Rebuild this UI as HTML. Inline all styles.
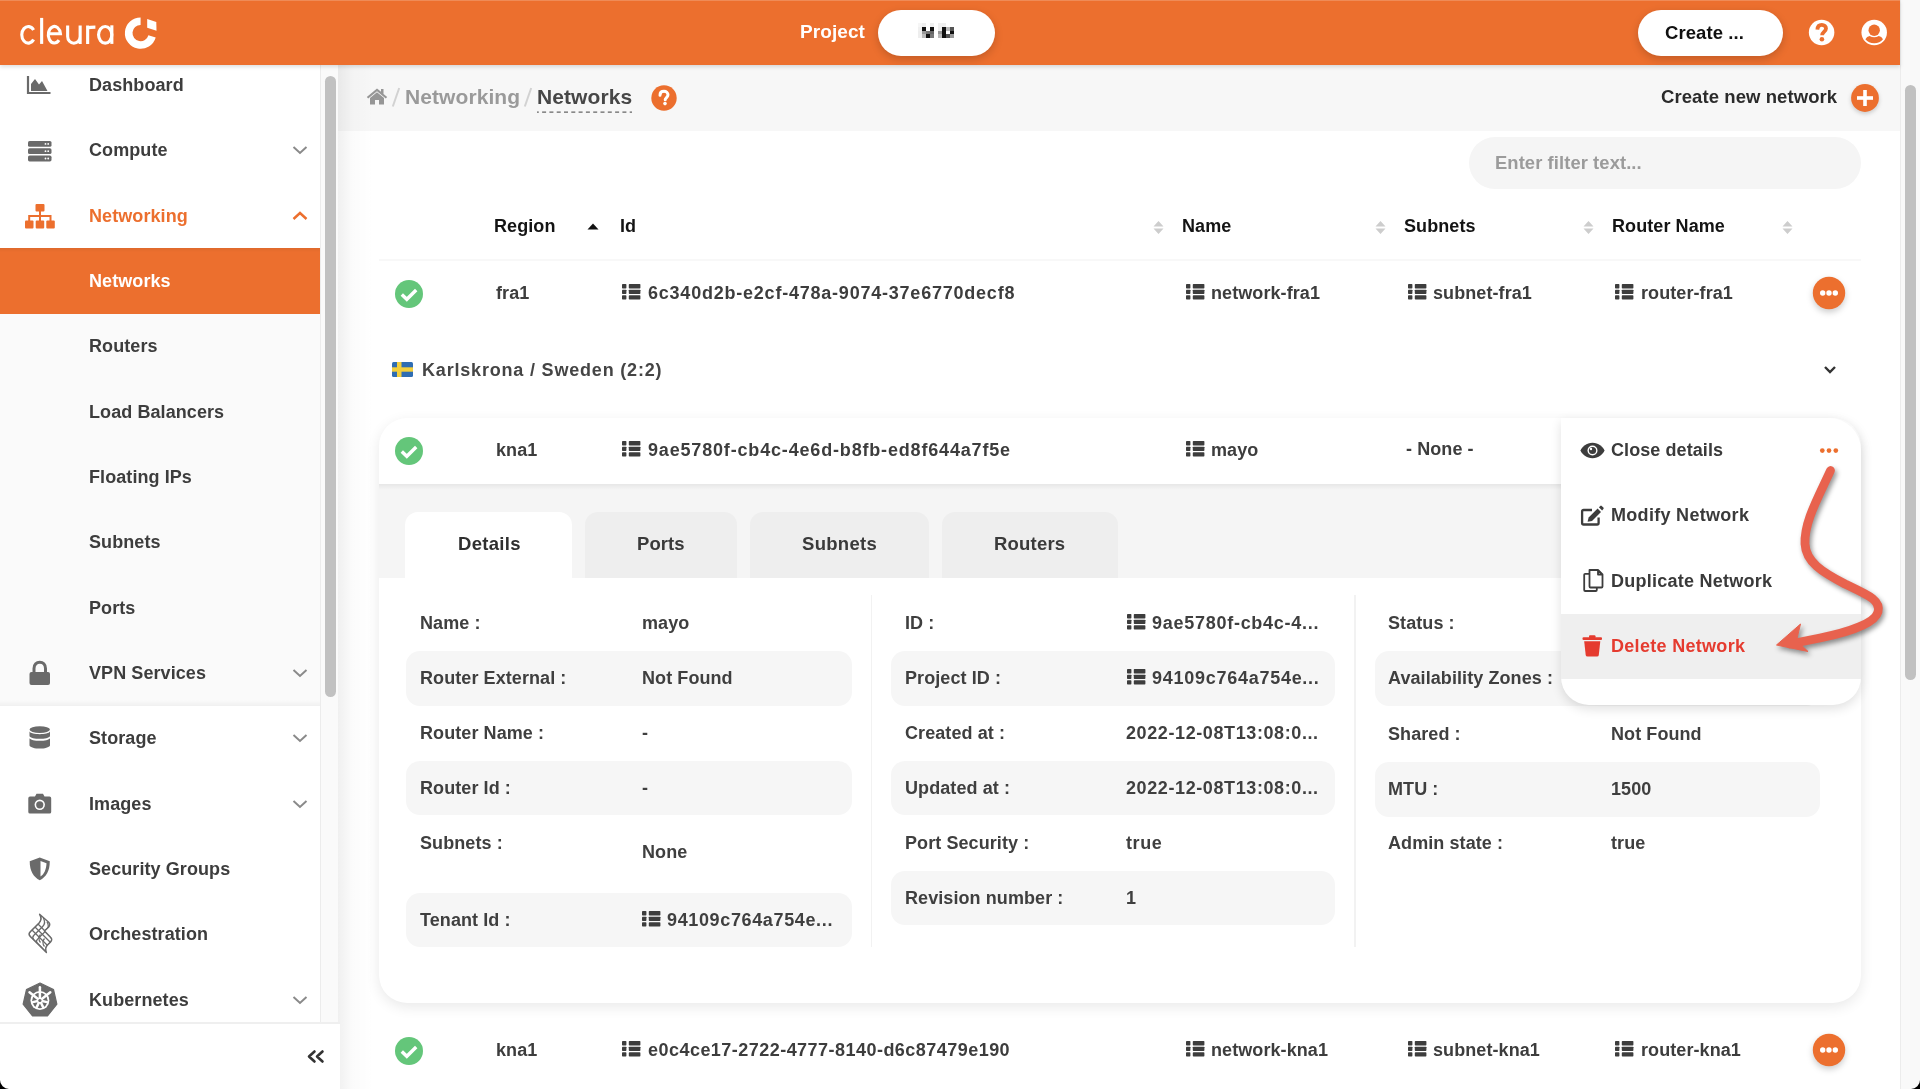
<!DOCTYPE html>
<html><head><meta charset="utf-8"><title>Networks</title>
<style>
html,body{margin:0;padding:0;}
body{width:1920px;height:1089px;overflow:hidden;position:relative;background:#fff;font-family:"Liberation Sans",sans-serif;}
.a{position:absolute;}
.t{position:absolute;white-space:nowrap;will-change:transform;}
svg.a{overflow:visible;}
</style></head><body>
<div class="a" style="left:338px;top:65px;width:1562px;height:1024px;background:#fff;"></div>
<div class="a" style="left:338px;top:65px;width:1562px;height:65.5px;background:#f7f7f7;"></div>
<div class="a" style="left:338px;top:65px;width:36px;height:1024px;background:linear-gradient(to right,rgba(0,0,0,0.06),rgba(0,0,0,0.015) 40%,rgba(0,0,0,0));"></div>
<svg class="a" style="left:366px;top:88px;" width="22" height="17" viewBox="0 0 22 17"><path d="M11 0.5 L0.8 9 L2.2 10.6 L11 3.3 L19.8 10.6 L21.2 9 L17.5 5.9 V1 H15 V3.8 Z M4 10 V16.5 H9 V12 H13 V16.5 H18 V10 L11 4.3 Z" fill="#969696"/></svg>
<svg class="a" style="left:390px;top:86px;" width="12" height="22" viewBox="0 0 12 22"><path d="M9.2 2 L2.8 20.5" stroke="#d2d2d2" stroke-width="2" fill="none"/></svg>
<div class="t" style="left:405px;top:81.80px;line-height:30px;font-size:21px;color:#9a9a9a;font-weight:700;letter-spacing:0.08px;">Networking</div>
<svg class="a" style="left:522px;top:86px;" width="12" height="22" viewBox="0 0 12 22"><path d="M9.2 2 L2.8 20.5" stroke="#d2d2d2" stroke-width="2" fill="none"/></svg>
<div class="t" style="left:537px;top:81.80px;line-height:30px;font-size:21px;color:#474747;font-weight:700;letter-spacing:0.08px;">Networks</div>
<svg class="a" style="left:536px;top:110px;" width="98" height="4" viewBox="0 0 98 4"><path d="M1 2 H96" stroke="#666" stroke-width="1.25" stroke-dasharray="4 3.3" stroke-dashoffset="2.2" fill="none"/></svg>
<svg class="a" style="left:651px;top:85px;" width="26" height="26" viewBox="0 0 26 26"><circle cx="13" cy="13" r="12.7" fill="#ec6f2e"/><path d="M9 10.2 C9 7.6 10.8 6.3 13 6.3 C15.3 6.3 17 7.8 17 9.8 C17 12.4 14.2 12.6 14.2 14.8" stroke="#fff" stroke-width="3" fill="none" stroke-linecap="round"/><circle cx="14" cy="18.6" r="1.8" fill="#fff"/></svg>
<div class="t" style="left:1661px;top:82.00px;line-height:30px;font-size:18.5px;color:#2b2b2b;font-weight:700;letter-spacing:0.08px;">Create new network</div>
<svg class="a" style="left:1846px;top:79px;filter:drop-shadow(0 2px 2px rgba(0,0,0,0.18));" width="38" height="38" viewBox="0 0 38 38"><circle cx="19" cy="19" r="13.9" fill="#ec6f2e"/><rect x="17.2" y="11" width="3.6" height="16" fill="#fff"/><rect x="11" y="17.2" width="16" height="3.6" fill="#fff"/></svg>
<div class="a" style="left:1469px;top:137px;width:392px;height:52px;background:#f5f5f5;border-radius:26px;"></div>
<div class="t" style="left:1495px;top:147.50px;line-height:30px;font-size:18.4px;color:#9b9b9b;font-weight:700;letter-spacing:0.08px;">Enter filter text...</div>
<div class="t" style="left:494px;top:211.00px;line-height:30px;font-size:18px;color:#141414;font-weight:700;letter-spacing:0.08px;">Region</div>
<svg class="a" style="left:587px;top:223px;" width="12" height="7" viewBox="0 0 12 7"><path d="M0.5 6.5 L6 0.5 L11.5 6.5 Z" fill="#111"/></svg>
<div class="t" style="left:619.5px;top:211.00px;line-height:30px;font-size:18px;color:#141414;font-weight:700;letter-spacing:0.08px;">Id</div>
<svg class="a" style="left:1153px;top:221px;" width="11" height="13" viewBox="0 0 11 13"><path d="M0.5 5.5 L5.5 0 L10.5 5.5 Z M0.5 7.5 L5.5 13 L10.5 7.5 Z" fill="#cdcdcd"/></svg>
<div class="t" style="left:1182px;top:211.00px;line-height:30px;font-size:18px;color:#141414;font-weight:700;letter-spacing:0.08px;">Name</div>
<svg class="a" style="left:1375px;top:221px;" width="11" height="13" viewBox="0 0 11 13"><path d="M0.5 5.5 L5.5 0 L10.5 5.5 Z M0.5 7.5 L5.5 13 L10.5 7.5 Z" fill="#cdcdcd"/></svg>
<div class="t" style="left:1403.5px;top:211.00px;line-height:30px;font-size:18px;color:#141414;font-weight:700;letter-spacing:0.08px;">Subnets</div>
<svg class="a" style="left:1583px;top:221px;" width="11" height="13" viewBox="0 0 11 13"><path d="M0.5 5.5 L5.5 0 L10.5 5.5 Z M0.5 7.5 L5.5 13 L10.5 7.5 Z" fill="#cdcdcd"/></svg>
<div class="t" style="left:1612px;top:211.00px;line-height:30px;font-size:18px;color:#141414;font-weight:700;letter-spacing:0.08px;">Router Name</div>
<svg class="a" style="left:1782px;top:221px;" width="11" height="13" viewBox="0 0 11 13"><path d="M0.5 5.5 L5.5 0 L10.5 5.5 Z M0.5 7.5 L5.5 13 L10.5 7.5 Z" fill="#cdcdcd"/></svg>
<div class="a" style="left:379px;top:259px;width:1482px;height:1.5px;background:#f8f8f8;"></div>
<svg class="a" style="left:395px;top:279.5px;" width="28" height="28" viewBox="0 0 28 28"><circle cx="14" cy="14" r="14" fill="#64c67a"/><path d="M6.8 14.5 L11.8 19.3 L21.2 10" stroke="#fff" stroke-width="3.4" fill="none"/></svg>
<div class="t" style="left:495.5px;top:278.00px;line-height:30px;font-size:18px;color:#3d3d3d;font-weight:700;letter-spacing:0.08px;">fra1</div>
<svg class="a" style="left:622.3px;top:284.3px;" width="19" height="16" viewBox="0 0 19 16"><rect x="0" y="0.10" width="4.4" height="4.3" rx="0.7" fill="#3d3d3d"/><rect x="6.8" y="0.10" width="11.6" height="4.3" rx="0.7" fill="#3d3d3d"/><rect x="0" y="5.65" width="4.4" height="4.3" rx="0.7" fill="#3d3d3d"/><rect x="6.8" y="5.65" width="11.6" height="4.3" rx="0.7" fill="#3d3d3d"/><rect x="0" y="11.20" width="4.4" height="4.3" rx="0.7" fill="#3d3d3d"/><rect x="6.8" y="11.20" width="11.6" height="4.3" rx="0.7" fill="#3d3d3d"/></svg>
<div class="t" style="left:648px;top:278.00px;line-height:30px;font-size:18px;color:#3d3d3d;font-weight:700;letter-spacing:0.777px;">6c340d2b-e2cf-478a-9074-37e6770decf8</div>
<svg class="a" style="left:1186.3px;top:284.3px;" width="19" height="16" viewBox="0 0 19 16"><rect x="0" y="0.10" width="4.4" height="4.3" rx="0.7" fill="#3d3d3d"/><rect x="6.8" y="0.10" width="11.6" height="4.3" rx="0.7" fill="#3d3d3d"/><rect x="0" y="5.65" width="4.4" height="4.3" rx="0.7" fill="#3d3d3d"/><rect x="6.8" y="5.65" width="11.6" height="4.3" rx="0.7" fill="#3d3d3d"/><rect x="0" y="11.20" width="4.4" height="4.3" rx="0.7" fill="#3d3d3d"/><rect x="6.8" y="11.20" width="11.6" height="4.3" rx="0.7" fill="#3d3d3d"/></svg>
<div class="t" style="left:1211px;top:278.00px;line-height:30px;font-size:18px;color:#3d3d3d;font-weight:700;letter-spacing:0.08px;">network-fra1</div>
<svg class="a" style="left:1408.3px;top:284.3px;" width="19" height="16" viewBox="0 0 19 16"><rect x="0" y="0.10" width="4.4" height="4.3" rx="0.7" fill="#3d3d3d"/><rect x="6.8" y="0.10" width="11.6" height="4.3" rx="0.7" fill="#3d3d3d"/><rect x="0" y="5.65" width="4.4" height="4.3" rx="0.7" fill="#3d3d3d"/><rect x="6.8" y="5.65" width="11.6" height="4.3" rx="0.7" fill="#3d3d3d"/><rect x="0" y="11.20" width="4.4" height="4.3" rx="0.7" fill="#3d3d3d"/><rect x="6.8" y="11.20" width="11.6" height="4.3" rx="0.7" fill="#3d3d3d"/></svg>
<div class="t" style="left:1433px;top:278.00px;line-height:30px;font-size:18px;color:#3d3d3d;font-weight:700;letter-spacing:0.08px;">subnet-fra1</div>
<svg class="a" style="left:1615.3px;top:284.3px;" width="19" height="16" viewBox="0 0 19 16"><rect x="0" y="0.10" width="4.4" height="4.3" rx="0.7" fill="#3d3d3d"/><rect x="6.8" y="0.10" width="11.6" height="4.3" rx="0.7" fill="#3d3d3d"/><rect x="0" y="5.65" width="4.4" height="4.3" rx="0.7" fill="#3d3d3d"/><rect x="6.8" y="5.65" width="11.6" height="4.3" rx="0.7" fill="#3d3d3d"/><rect x="0" y="11.20" width="4.4" height="4.3" rx="0.7" fill="#3d3d3d"/><rect x="6.8" y="11.20" width="11.6" height="4.3" rx="0.7" fill="#3d3d3d"/></svg>
<div class="t" style="left:1641px;top:278.00px;line-height:30px;font-size:18px;color:#3d3d3d;font-weight:700;letter-spacing:0.08px;">router-fra1</div>
<svg class="a" style="left:1807px;top:273px;filter:drop-shadow(0 3px 3px rgba(0,0,0,0.2));" width="44" height="44" viewBox="0 0 44 44"><circle cx="22" cy="20" r="16.2" fill="#ec6f2e"/><circle cx="15.7" cy="20" r="2.7" fill="#fff"/><circle cx="22" cy="20" r="2.7" fill="#fff"/><circle cx="28.3" cy="20" r="2.7" fill="#fff"/></svg>
<svg class="a" style="left:392px;top:362px;" width="21" height="15" viewBox="0 0 21 15"><rect width="21" height="15" rx="1.5" fill="#2f6db3"/><rect x="5" width="4.5" height="15" fill="#f3cf3c"/><rect y="5.3" width="21" height="4.4" fill="#f3cf3c"/></svg>
<div class="t" style="left:422px;top:355.00px;line-height:30px;font-size:18px;color:#454545;font-weight:700;letter-spacing:0.81px;">Karlskrona / Sweden (2:2)</div>
<svg class="a" style="left:1823px;top:365px;" width="14" height="10" viewBox="0 0 14 10"><path d="M2 2 L7 7 L12 2" stroke="#333" stroke-width="2.4" fill="none"/></svg>
<div class="a" style="left:379px;top:418px;width:1482px;height:585px;background:#fff;border-radius:28px;box-shadow:0 4px 14px rgba(0,0,0,0.09);overflow:hidden;"></div>
<div class="a" style="left:379px;top:483.5px;width:1482px;height:94px;background:#f5f5f5;"></div>
<div class="a" style="left:379px;top:483.5px;width:1482px;height:6px;background:linear-gradient(to bottom,rgba(0,0,0,0.06),rgba(0,0,0,0));"></div>
<div class="a" style="left:405px;top:512px;width:167px;height:66px;background:#fff;border-radius:13px 13px 0 0;"></div>
<div class="a" style="left:585px;top:512px;width:152px;height:65.5px;background:#eeeeee;border-radius:13px 13px 0 0;"></div>
<div class="a" style="left:749.5px;top:512px;width:179.5px;height:65.5px;background:#eeeeee;border-radius:13px 13px 0 0;"></div>
<div class="a" style="left:942px;top:512px;width:175.5px;height:65.5px;background:#eeeeee;border-radius:13px 13px 0 0;"></div>
<div class="t" style="left:457.5px;top:528.50px;line-height:30px;font-size:18.5px;color:#2f2f2f;font-weight:700;letter-spacing:0.3px;">Details</div>
<div class="t" style="left:637px;top:528.50px;line-height:30px;font-size:18.5px;color:#3a3a3a;font-weight:700;letter-spacing:0.08px;">Ports</div>
<div class="t" style="left:802px;top:528.50px;line-height:30px;font-size:18.5px;color:#3a3a3a;font-weight:700;letter-spacing:0.3px;">Subnets</div>
<div class="t" style="left:994px;top:528.50px;line-height:30px;font-size:18.5px;color:#3a3a3a;font-weight:700;letter-spacing:0.2px;">Routers</div>
<svg class="a" style="left:395px;top:436.5px;" width="28" height="28" viewBox="0 0 28 28"><circle cx="14" cy="14" r="14" fill="#64c67a"/><path d="M6.8 14.5 L11.8 19.3 L21.2 10" stroke="#fff" stroke-width="3.4" fill="none"/></svg>
<div class="t" style="left:495.5px;top:435.00px;line-height:30px;font-size:18px;color:#3d3d3d;font-weight:700;letter-spacing:0.08px;">kna1</div>
<svg class="a" style="left:622.3px;top:441.3px;" width="19" height="16" viewBox="0 0 19 16"><rect x="0" y="0.10" width="4.4" height="4.3" rx="0.7" fill="#3d3d3d"/><rect x="6.8" y="0.10" width="11.6" height="4.3" rx="0.7" fill="#3d3d3d"/><rect x="0" y="5.65" width="4.4" height="4.3" rx="0.7" fill="#3d3d3d"/><rect x="6.8" y="5.65" width="11.6" height="4.3" rx="0.7" fill="#3d3d3d"/><rect x="0" y="11.20" width="4.4" height="4.3" rx="0.7" fill="#3d3d3d"/><rect x="6.8" y="11.20" width="11.6" height="4.3" rx="0.7" fill="#3d3d3d"/></svg>
<div class="t" style="left:648px;top:435.00px;line-height:30px;font-size:18px;color:#3d3d3d;font-weight:700;letter-spacing:0.827px;">9ae5780f-cb4c-4e6d-b8fb-ed8f644a7f5e</div>
<svg class="a" style="left:1186.3px;top:441.3px;" width="19" height="16" viewBox="0 0 19 16"><rect x="0" y="0.10" width="4.4" height="4.3" rx="0.7" fill="#3d3d3d"/><rect x="6.8" y="0.10" width="11.6" height="4.3" rx="0.7" fill="#3d3d3d"/><rect x="0" y="5.65" width="4.4" height="4.3" rx="0.7" fill="#3d3d3d"/><rect x="6.8" y="5.65" width="11.6" height="4.3" rx="0.7" fill="#3d3d3d"/><rect x="0" y="11.20" width="4.4" height="4.3" rx="0.7" fill="#3d3d3d"/><rect x="6.8" y="11.20" width="11.6" height="4.3" rx="0.7" fill="#3d3d3d"/></svg>
<div class="t" style="left:1211px;top:435.00px;line-height:30px;font-size:18px;color:#3d3d3d;font-weight:700;letter-spacing:0.08px;">mayo</div>
<div class="t" style="left:1406px;top:434.00px;line-height:30px;font-size:18px;color:#3d3d3d;font-weight:700;letter-spacing:0.08px;">- None -</div>
<div class="a" style="left:870.5px;top:595px;width:1.5px;height:352px;background:#f2f2f2;"></div>
<div class="a" style="left:1354px;top:595px;width:1.5px;height:352px;background:#f2f2f2;"></div>
<div class="a" style="left:405.5px;top:651px;width:446px;height:54.5px;background:#f6f6f6;border-radius:14px;"></div>
<div class="a" style="left:405.5px;top:760.5px;width:446px;height:54.5px;background:#f6f6f6;border-radius:14px;"></div>
<div class="a" style="left:405.5px;top:892.5px;width:446px;height:54.5px;background:#f6f6f6;border-radius:14px;"></div>
<div class="a" style="left:891px;top:651px;width:444px;height:54.5px;background:#f6f6f6;border-radius:14px;"></div>
<div class="a" style="left:891px;top:760.5px;width:444px;height:54.5px;background:#f6f6f6;border-radius:14px;"></div>
<div class="a" style="left:891px;top:870.5px;width:444px;height:54.5px;background:#f6f6f6;border-radius:14px;"></div>
<div class="a" style="left:1375px;top:651px;width:445px;height:54.5px;background:#f6f6f6;border-radius:14px;"></div>
<div class="a" style="left:1375px;top:762px;width:445px;height:54.5px;background:#f6f6f6;border-radius:14px;"></div>
<div class="t" style="left:419.5px;top:607.60px;line-height:30px;font-size:18px;color:#3f3f3f;font-weight:700;letter-spacing:0.08px;">Name :</div>
<div class="t" style="left:641.5px;top:607.60px;line-height:30px;font-size:18px;color:#3f3f3f;font-weight:700;letter-spacing:0.08px;">mayo</div>
<div class="t" style="left:419.5px;top:662.60px;line-height:30px;font-size:18px;color:#3f3f3f;font-weight:700;letter-spacing:0.08px;">Router External :</div>
<div class="t" style="left:641.5px;top:662.60px;line-height:30px;font-size:18px;color:#3f3f3f;font-weight:700;letter-spacing:0.08px;">Not Found</div>
<div class="t" style="left:419.5px;top:717.60px;line-height:30px;font-size:18px;color:#3f3f3f;font-weight:700;letter-spacing:0.08px;">Router Name :</div>
<div class="t" style="left:641.5px;top:717.60px;line-height:30px;font-size:18px;color:#3f3f3f;font-weight:700;letter-spacing:0.08px;">-</div>
<div class="t" style="left:419.5px;top:772.60px;line-height:30px;font-size:18px;color:#3f3f3f;font-weight:700;letter-spacing:0.08px;">Router Id :</div>
<div class="t" style="left:641.5px;top:772.60px;line-height:30px;font-size:18px;color:#3f3f3f;font-weight:700;letter-spacing:0.08px;">-</div>
<div class="t" style="left:419.5px;top:827.50px;line-height:30px;font-size:18px;color:#3f3f3f;font-weight:700;letter-spacing:0.08px;">Subnets :</div>
<div class="t" style="left:641.5px;top:836.50px;line-height:30px;font-size:18px;color:#3f3f3f;font-weight:700;letter-spacing:0.08px;">None</div>
<div class="t" style="left:419.5px;top:904.50px;line-height:30px;font-size:18px;color:#3f3f3f;font-weight:700;letter-spacing:0.08px;">Tenant Id :</div>
<svg class="a" style="left:642.3px;top:910.8px;" width="19" height="16" viewBox="0 0 19 16"><rect x="0" y="0.10" width="4.4" height="4.3" rx="0.7" fill="#3d3d3d"/><rect x="6.8" y="0.10" width="11.6" height="4.3" rx="0.7" fill="#3d3d3d"/><rect x="0" y="5.65" width="4.4" height="4.3" rx="0.7" fill="#3d3d3d"/><rect x="6.8" y="5.65" width="11.6" height="4.3" rx="0.7" fill="#3d3d3d"/><rect x="0" y="11.20" width="4.4" height="4.3" rx="0.7" fill="#3d3d3d"/><rect x="6.8" y="11.20" width="11.6" height="4.3" rx="0.7" fill="#3d3d3d"/></svg>
<div class="t" style="left:667px;top:904.50px;line-height:30px;font-size:18px;color:#3f3f3f;font-weight:700;letter-spacing:0.64px;">94109c764a754e...</div>
<div class="t" style="left:904.5px;top:608.00px;line-height:30px;font-size:18px;color:#3f3f3f;font-weight:700;letter-spacing:0.08px;">ID :</div>
<svg class="a" style="left:1127.3px;top:614.3px;" width="19" height="16" viewBox="0 0 19 16"><rect x="0" y="0.10" width="4.4" height="4.3" rx="0.7" fill="#3d3d3d"/><rect x="6.8" y="0.10" width="11.6" height="4.3" rx="0.7" fill="#3d3d3d"/><rect x="0" y="5.65" width="4.4" height="4.3" rx="0.7" fill="#3d3d3d"/><rect x="6.8" y="5.65" width="11.6" height="4.3" rx="0.7" fill="#3d3d3d"/><rect x="0" y="11.20" width="4.4" height="4.3" rx="0.7" fill="#3d3d3d"/><rect x="6.8" y="11.20" width="11.6" height="4.3" rx="0.7" fill="#3d3d3d"/></svg>
<div class="t" style="left:1151.5px;top:608.00px;line-height:30px;font-size:18px;color:#3f3f3f;font-weight:700;letter-spacing:0.73px;">9ae5780f-cb4c-4...</div>
<div class="t" style="left:904.5px;top:663.00px;line-height:30px;font-size:18px;color:#3f3f3f;font-weight:700;letter-spacing:0.08px;">Project ID :</div>
<svg class="a" style="left:1127.3px;top:669.3px;" width="19" height="16" viewBox="0 0 19 16"><rect x="0" y="0.10" width="4.4" height="4.3" rx="0.7" fill="#3d3d3d"/><rect x="6.8" y="0.10" width="11.6" height="4.3" rx="0.7" fill="#3d3d3d"/><rect x="0" y="5.65" width="4.4" height="4.3" rx="0.7" fill="#3d3d3d"/><rect x="6.8" y="5.65" width="11.6" height="4.3" rx="0.7" fill="#3d3d3d"/><rect x="0" y="11.20" width="4.4" height="4.3" rx="0.7" fill="#3d3d3d"/><rect x="6.8" y="11.20" width="11.6" height="4.3" rx="0.7" fill="#3d3d3d"/></svg>
<div class="t" style="left:1151.5px;top:663.00px;line-height:30px;font-size:18px;color:#3f3f3f;font-weight:700;letter-spacing:0.73px;">94109c764a754e...</div>
<div class="t" style="left:904.5px;top:717.60px;line-height:30px;font-size:18px;color:#3f3f3f;font-weight:700;letter-spacing:0.08px;">Created at :</div>
<div class="t" style="left:1126px;top:717.60px;line-height:30px;font-size:18px;color:#3f3f3f;font-weight:700;letter-spacing:0.6px;">2022-12-08T13:08:0...</div>
<div class="t" style="left:904.5px;top:772.60px;line-height:30px;font-size:18px;color:#3f3f3f;font-weight:700;letter-spacing:0.08px;">Updated at :</div>
<div class="t" style="left:1126px;top:772.60px;line-height:30px;font-size:18px;color:#3f3f3f;font-weight:700;letter-spacing:0.6px;">2022-12-08T13:08:0...</div>
<div class="t" style="left:904.5px;top:827.60px;line-height:30px;font-size:18px;color:#3f3f3f;font-weight:700;letter-spacing:0.08px;">Port Security :</div>
<div class="t" style="left:1126px;top:827.60px;line-height:30px;font-size:18px;color:#3f3f3f;font-weight:700;letter-spacing:0.6px;">true</div>
<div class="t" style="left:904.5px;top:882.50px;line-height:30px;font-size:18px;color:#3f3f3f;font-weight:700;letter-spacing:0.08px;">Revision number :</div>
<div class="t" style="left:1126px;top:882.50px;line-height:30px;font-size:18px;color:#3f3f3f;font-weight:700;letter-spacing:0.6px;">1</div>
<div class="t" style="left:1388px;top:607.60px;line-height:30px;font-size:18px;color:#3f3f3f;font-weight:700;letter-spacing:0.08px;">Status :</div>
<div class="t" style="left:1388px;top:662.60px;line-height:30px;font-size:18px;color:#3f3f3f;font-weight:700;letter-spacing:0.08px;">Availability Zones :</div>
<div class="t" style="left:1388px;top:718.60px;line-height:30px;font-size:18px;color:#3f3f3f;font-weight:700;letter-spacing:0.08px;">Shared :</div>
<div class="t" style="left:1610.5px;top:718.60px;line-height:30px;font-size:18px;color:#3f3f3f;font-weight:700;letter-spacing:0.08px;">Not Found</div>
<div class="t" style="left:1388px;top:773.60px;line-height:30px;font-size:18px;color:#3f3f3f;font-weight:700;letter-spacing:0.08px;">MTU :</div>
<div class="t" style="left:1610.5px;top:773.60px;line-height:30px;font-size:18px;color:#3f3f3f;font-weight:700;letter-spacing:0.08px;">1500</div>
<div class="t" style="left:1388px;top:828.40px;line-height:30px;font-size:18px;color:#3f3f3f;font-weight:700;letter-spacing:0.08px;">Admin state :</div>
<div class="t" style="left:1610.5px;top:828.40px;line-height:30px;font-size:18px;color:#3f3f3f;font-weight:700;letter-spacing:0.08px;">true</div>
<div class="a" style="left:1561px;top:418px;width:300px;height:287px;background:#fff;border-radius:0 32px 28px 28px;box-shadow:0 4px 11px rgba(0,0,0,0.12);overflow:hidden;"></div>
<div class="a" style="left:1561px;top:614px;width:300px;height:64.5px;background:#efefef;"></div>
<svg class="a" style="left:1580px;top:442px;" width="25" height="17" viewBox="0 0 25 17"><path d="M12.5 0.8 C6.5 0.8 2 4.8 0.5 8.5 C2 12.2 6.5 16.2 12.5 16.2 C18.5 16.2 23 12.2 24.5 8.5 C23 4.8 18.5 0.8 12.5 0.8 Z" fill="#3d3d3d"/><circle cx="12.5" cy="8.5" r="5" fill="#fff"/><circle cx="12.5" cy="8.5" r="3.6" fill="#3d3d3d"/><circle cx="11" cy="7" r="1.2" fill="#fff"/></svg>
<div class="t" style="left:1611px;top:434.70px;line-height:30px;font-size:18px;color:#3a3a3a;font-weight:700;letter-spacing:0.08px;">Close details</div>
<svg class="a" style="left:1818px;top:446px;" width="22" height="9" viewBox="0 0 22 9"><circle cx="4.3" cy="4.6" r="2.35" fill="#ec6f2e"/><circle cx="11" cy="4.6" r="2.35" fill="#ec6f2e"/><circle cx="17.8" cy="4.6" r="2.35" fill="#ec6f2e"/></svg>
<svg class="a" style="left:1580px;top:505px;" width="25" height="22" viewBox="0 0 25 22"><path d="M12 5 H3.6 Q2.1 5 2.1 6.5 V18 Q2.1 19.5 3.6 19.5 H17.1 Q18.6 19.5 18.6 18 V12.5" stroke="#3d3d3d" stroke-width="2.3" fill="none"/><path d="M7.6 16.8 L8.6 12.6 L17.6 3.6 L21 7 L12 16 Z" fill="#3d3d3d"/><path d="M18.9 2.3 L20.3 0.9 Q21 0.2 21.7 0.9 L23.4 2.6 Q24.1 3.3 23.4 4 L22.1 5.4 Z" fill="#3d3d3d"/></svg>
<div class="t" style="left:1611px;top:499.80px;line-height:30px;font-size:18px;color:#3a3a3a;font-weight:700;letter-spacing:0.3px;">Modify Network</div>
<svg class="a" style="left:1582.8px;top:568.8px;" width="21" height="23" viewBox="0 0 21 23"><path d="M6.5 4.8 H2.2 Q1.2 4.8 1.2 5.8 V21 Q1.2 22 2.2 22 H12.8 Q13.8 22 13.8 21 V18.5" stroke="#3d3d3d" stroke-width="1.8" fill="none"/><path d="M6.5 1 H15 L19.5 5.5 V17.5 Q19.5 18.5 18.5 18.5 H7.5 Q6.5 18.5 6.5 17.5 Z M15 1 V5.5 H19.5" stroke="#3d3d3d" stroke-width="1.8" fill="none" stroke-linejoin="round"/></svg>
<div class="t" style="left:1611px;top:565.70px;line-height:30px;font-size:18px;color:#3a3a3a;font-weight:700;letter-spacing:0.25px;">Duplicate Network</div>
<svg class="a" style="left:1582px;top:635px;" width="21" height="22" viewBox="0 0 21 22"><rect x="0.5" y="2.3" width="19.5" height="2.6" rx="1" fill="#e53b2f"/><rect x="7" y="0.3" width="6.5" height="3" rx="1" fill="#e53b2f"/><path d="M2.2 6.3 H18.3 L16.8 20 Q16.6 21.6 15 21.6 H5.5 Q3.9 21.6 3.7 20 Z" fill="#e53b2f"/></svg>
<div class="t" style="left:1611px;top:630.70px;line-height:30px;font-size:18px;color:#e53b2f;font-weight:700;letter-spacing:0.3px;">Delete Network</div>
<svg class="a" style="left:395px;top:1036.5px;" width="28" height="28" viewBox="0 0 28 28"><circle cx="14" cy="14" r="14" fill="#64c67a"/><path d="M6.8 14.5 L11.8 19.3 L21.2 10" stroke="#fff" stroke-width="3.4" fill="none"/></svg>
<div class="t" style="left:495.5px;top:1035.00px;line-height:30px;font-size:18px;color:#3d3d3d;font-weight:700;letter-spacing:0.08px;">kna1</div>
<svg class="a" style="left:622.3px;top:1041.3px;" width="19" height="16" viewBox="0 0 19 16"><rect x="0" y="0.10" width="4.4" height="4.3" rx="0.7" fill="#3d3d3d"/><rect x="6.8" y="0.10" width="11.6" height="4.3" rx="0.7" fill="#3d3d3d"/><rect x="0" y="5.65" width="4.4" height="4.3" rx="0.7" fill="#3d3d3d"/><rect x="6.8" y="5.65" width="11.6" height="4.3" rx="0.7" fill="#3d3d3d"/><rect x="0" y="11.20" width="4.4" height="4.3" rx="0.7" fill="#3d3d3d"/><rect x="6.8" y="11.20" width="11.6" height="4.3" rx="0.7" fill="#3d3d3d"/></svg>
<div class="t" style="left:648px;top:1035.00px;line-height:30px;font-size:18px;color:#3d3d3d;font-weight:700;letter-spacing:0.466px;">e0c4ce17-2722-4777-8140-d6c87479e190</div>
<svg class="a" style="left:1186.3px;top:1041.3px;" width="19" height="16" viewBox="0 0 19 16"><rect x="0" y="0.10" width="4.4" height="4.3" rx="0.7" fill="#3d3d3d"/><rect x="6.8" y="0.10" width="11.6" height="4.3" rx="0.7" fill="#3d3d3d"/><rect x="0" y="5.65" width="4.4" height="4.3" rx="0.7" fill="#3d3d3d"/><rect x="6.8" y="5.65" width="11.6" height="4.3" rx="0.7" fill="#3d3d3d"/><rect x="0" y="11.20" width="4.4" height="4.3" rx="0.7" fill="#3d3d3d"/><rect x="6.8" y="11.20" width="11.6" height="4.3" rx="0.7" fill="#3d3d3d"/></svg>
<div class="t" style="left:1211px;top:1035.00px;line-height:30px;font-size:18px;color:#3d3d3d;font-weight:700;letter-spacing:0.08px;">network-kna1</div>
<svg class="a" style="left:1408.3px;top:1041.3px;" width="19" height="16" viewBox="0 0 19 16"><rect x="0" y="0.10" width="4.4" height="4.3" rx="0.7" fill="#3d3d3d"/><rect x="6.8" y="0.10" width="11.6" height="4.3" rx="0.7" fill="#3d3d3d"/><rect x="0" y="5.65" width="4.4" height="4.3" rx="0.7" fill="#3d3d3d"/><rect x="6.8" y="5.65" width="11.6" height="4.3" rx="0.7" fill="#3d3d3d"/><rect x="0" y="11.20" width="4.4" height="4.3" rx="0.7" fill="#3d3d3d"/><rect x="6.8" y="11.20" width="11.6" height="4.3" rx="0.7" fill="#3d3d3d"/></svg>
<div class="t" style="left:1433px;top:1035.00px;line-height:30px;font-size:18px;color:#3d3d3d;font-weight:700;letter-spacing:0.08px;">subnet-kna1</div>
<svg class="a" style="left:1615.3px;top:1041.3px;" width="19" height="16" viewBox="0 0 19 16"><rect x="0" y="0.10" width="4.4" height="4.3" rx="0.7" fill="#3d3d3d"/><rect x="6.8" y="0.10" width="11.6" height="4.3" rx="0.7" fill="#3d3d3d"/><rect x="0" y="5.65" width="4.4" height="4.3" rx="0.7" fill="#3d3d3d"/><rect x="6.8" y="5.65" width="11.6" height="4.3" rx="0.7" fill="#3d3d3d"/><rect x="0" y="11.20" width="4.4" height="4.3" rx="0.7" fill="#3d3d3d"/><rect x="6.8" y="11.20" width="11.6" height="4.3" rx="0.7" fill="#3d3d3d"/></svg>
<div class="t" style="left:1641px;top:1035.00px;line-height:30px;font-size:18px;color:#3d3d3d;font-weight:700;letter-spacing:0.08px;">router-kna1</div>
<svg class="a" style="left:1807px;top:1030px;filter:drop-shadow(0 3px 3px rgba(0,0,0,0.2));" width="44" height="44" viewBox="0 0 44 44"><circle cx="22" cy="20" r="16.2" fill="#ec6f2e"/><circle cx="15.7" cy="20" r="2.7" fill="#fff"/><circle cx="22" cy="20" r="2.7" fill="#fff"/><circle cx="28.3" cy="20" r="2.7" fill="#fff"/></svg>
<svg class="a" style="left:1760px;top:460px;" width="140" height="210" viewBox="0 0 140 210"><g style="filter:drop-shadow(2px 3px 2.5px rgba(0,0,0,0.42))"><path d="M70.5 10.5 C58 38 44 62 45 84 C46 102 62 112 85 124 C108 135 121 140 118 152 C115 163 90 172 60 178 L30 184" stroke="#e8624e" stroke-width="8.8" fill="none" stroke-linecap="round"/><path d="M16.5 185 L40.5 164 L36.5 180.5 L48 191.5 Z" fill="#e8624e" stroke="#e8624e" stroke-width="1" stroke-linejoin="round"/></g></svg>
<div class="a" style="left:0px;top:65px;width:320px;height:1024px;background:#fff;"></div>
<div class="a" style="left:0px;top:248.33250000000004px;width:320px;height:457.331px;background:#fafafa;"></div>
<div class="a" style="left:0px;top:699.6635px;width:320px;height:6px;background:linear-gradient(to bottom,rgba(0,0,0,0),rgba(0,0,0,0.04));"></div>
<div class="a" style="left:0px;top:248.33250000000004px;width:320px;height:65.333px;background:#ec6f2e;"></div>
<div class="a" style="left:0px;top:248.33250000000004px;width:320px;height:4px;background:linear-gradient(to bottom,rgba(0,0,0,0.06),rgba(0,0,0,0));"></div>
<div class="t" style="left:88.5px;top:70.00px;line-height:30px;font-size:18px;color:#3d3d3d;font-weight:700;letter-spacing:0.08px;">Dashboard</div>
<div class="t" style="left:88.5px;top:135.33px;line-height:30px;font-size:18px;color:#3d3d3d;font-weight:700;letter-spacing:0.08px;">Compute</div>
<svg class="a" style="left:292px;top:145.333px;" width="16" height="10" viewBox="0 0 16 10"><path d="M1.5 2 L8 8 L14.5 2" stroke="#8a8a8a" stroke-width="2" fill="none"/></svg>
<div class="t" style="left:88.5px;top:200.67px;line-height:30px;font-size:18px;color:#ec6f2e;font-weight:700;letter-spacing:0.08px;">Networking</div>
<svg class="a" style="left:292px;top:210.666px;" width="16" height="10" viewBox="0 0 16 10"><path d="M1.5 8 L8 2 L14.5 8" stroke="#ec6f2e" stroke-width="2.4" fill="none"/></svg>
<div class="t" style="left:88.5px;top:266.00px;line-height:30px;font-size:18px;color:#fff;font-weight:700;letter-spacing:0.08px;">Networks</div>
<div class="t" style="left:88.5px;top:331.33px;line-height:30px;font-size:18px;color:#3d3d3d;font-weight:700;letter-spacing:0.08px;">Routers</div>
<div class="t" style="left:88.5px;top:396.66px;line-height:30px;font-size:18px;color:#3d3d3d;font-weight:700;letter-spacing:0.08px;">Load Balancers</div>
<div class="t" style="left:88.5px;top:462.00px;line-height:30px;font-size:18px;color:#3d3d3d;font-weight:700;letter-spacing:0.08px;">Floating IPs</div>
<div class="t" style="left:88.5px;top:527.33px;line-height:30px;font-size:18px;color:#3d3d3d;font-weight:700;letter-spacing:0.08px;">Subnets</div>
<div class="t" style="left:88.5px;top:592.66px;line-height:30px;font-size:18px;color:#3d3d3d;font-weight:700;letter-spacing:0.08px;">Ports</div>
<div class="t" style="left:88.5px;top:658.00px;line-height:30px;font-size:18px;color:#3d3d3d;font-weight:700;letter-spacing:0.08px;">VPN Services</div>
<svg class="a" style="left:292px;top:667.997px;" width="16" height="10" viewBox="0 0 16 10"><path d="M1.5 2 L8 8 L14.5 2" stroke="#8a8a8a" stroke-width="2" fill="none"/></svg>
<div class="t" style="left:88.5px;top:723.33px;line-height:30px;font-size:18px;color:#3d3d3d;font-weight:700;letter-spacing:0.08px;">Storage</div>
<svg class="a" style="left:292px;top:733.3299999999999px;" width="16" height="10" viewBox="0 0 16 10"><path d="M1.5 2 L8 8 L14.5 2" stroke="#8a8a8a" stroke-width="2" fill="none"/></svg>
<div class="t" style="left:88.5px;top:788.66px;line-height:30px;font-size:18px;color:#3d3d3d;font-weight:700;letter-spacing:0.08px;">Images</div>
<svg class="a" style="left:292px;top:798.663px;" width="16" height="10" viewBox="0 0 16 10"><path d="M1.5 2 L8 8 L14.5 2" stroke="#8a8a8a" stroke-width="2" fill="none"/></svg>
<div class="t" style="left:88.5px;top:854.00px;line-height:30px;font-size:18px;color:#3d3d3d;font-weight:700;letter-spacing:0.08px;">Security Groups</div>
<div class="t" style="left:88.5px;top:919.33px;line-height:30px;font-size:18px;color:#3d3d3d;font-weight:700;letter-spacing:0.08px;">Orchestration</div>
<div class="t" style="left:88.5px;top:984.66px;line-height:30px;font-size:18px;color:#3d3d3d;font-weight:700;letter-spacing:0.08px;">Kubernetes</div>
<svg class="a" style="left:292px;top:994.662px;" width="16" height="10" viewBox="0 0 16 10"><path d="M1.5 2 L8 8 L14.5 2" stroke="#8a8a8a" stroke-width="2" fill="none"/></svg>
<svg class="a" style="left:27px;top:76px;" width="24" height="18" viewBox="0 0 24 18"><path d="M1 0 V17 H23.5" stroke="#6a6a6a" stroke-width="2.2" fill="none"/><path d="M4 15 V8 L8 3 L12 8.5 L15 5 L20.5 15 Z" fill="#6a6a6a"/></svg>
<svg class="a" style="left:27.5px;top:140.5px;" width="23.5" height="20.5" viewBox="0 0 23.5 20.5"><rect x="0" y="0" width="23.5" height="5.8" rx="1.6" fill="#6a6a6a"/><rect x="0" y="7.3" width="23.5" height="5.8" rx="1.6" fill="#6a6a6a"/><rect x="0" y="14.6" width="23.5" height="5.8" rx="1.6" fill="#6a6a6a"/><circle cx="17.5" cy="2.9" r="0.9" fill="#fff"/><circle cx="20.2" cy="2.9" r="0.9" fill="#fff"/><circle cx="17.5" cy="10.2" r="0.9" fill="#fff"/><circle cx="20.2" cy="10.2" r="0.9" fill="#fff"/><circle cx="17.5" cy="17.5" r="0.9" fill="#fff"/><circle cx="20.2" cy="17.5" r="0.9" fill="#fff"/></svg>
<svg class="a" style="left:24.5px;top:203.5px;" width="30" height="24.5" viewBox="0 0 30 24.5"><rect x="10.5" y="0" width="9" height="7.5" rx="1" fill="#ec6f2e"/><rect x="0" y="16.5" width="8.5" height="8" rx="1" fill="#ec6f2e"/><rect x="10.7" y="16.5" width="8.5" height="8" rx="1" fill="#ec6f2e"/><rect x="21.3" y="16.5" width="8.5" height="8" rx="1" fill="#ec6f2e"/><path d="M15 7 V17 M4.2 17 V12 H25.5 V17" stroke="#ec6f2e" stroke-width="2" fill="none"/></svg>
<svg class="a" style="left:28.5px;top:660.5px;" width="21.5" height="24.5" viewBox="0 0 21.5 24.5"><path d="M5 11 V7.5 C5 3.5 7.5 1.3 10.75 1.3 C14 1.3 16.5 3.5 16.5 7.5 V11" stroke="#6a6a6a" stroke-width="3" fill="none"/><rect x="0.5" y="11" width="20.5" height="13" rx="2" fill="#6a6a6a"/></svg>
<svg class="a" style="left:28.5px;top:726px;" width="21.5" height="24" viewBox="0 0 21.5 24"><ellipse cx="10.75" cy="3.6" rx="10.2" ry="3.4" fill="#6a6a6a"/><path d="M0.5 5.5 C2 9 19.5 9 21 5.5 V10.2 C19.5 13.6 2 13.6 0.5 10.2 Z" fill="#6a6a6a"/><path d="M0.5 12.3 C2 15.7 19.5 15.7 21 12.3 V19.5 C19.5 23.6 2 23.6 0.5 19.5 Z" fill="#6a6a6a"/></svg>
<svg class="a" style="left:27.5px;top:792.5px;" width="23.5" height="21" viewBox="0 0 23.5 21"><path d="M7 3.5 L8.5 0.8 H15 L16.5 3.5 H21.5 Q23.2 3.5 23.2 5.2 V19 Q23.2 20.6 21.5 20.6 H2 Q0.3 20.6 0.3 19 V5.2 Q0.3 3.5 2 3.5 Z" fill="#6a6a6a"/><circle cx="11.75" cy="11.8" r="5.2" fill="#fff"/><circle cx="11.75" cy="11.8" r="3.6" fill="#6a6a6a"/></svg>
<svg class="a" style="left:28.5px;top:856.5px;" width="21.5" height="24" viewBox="0 0 21.5 24"><path d="M10.75 0.5 L20.8 4.3 C20.8 14 17 20.2 10.75 23.3 C4.5 20.2 0.7 14 0.7 4.3 Z" fill="#6a6a6a"/><path d="M11.5 4 L17.5 6.3 C17.3 12.5 15 17.4 11.5 19.6 Z" fill="#fff"/></svg>
<svg class="a" style="left:26px;top:914px;" width="26" height="40" viewBox="0 0 26 40"><defs><clipPath id="hc"><path d="M13.6 0.3 C15.5 3.5 15.3 6.5 13 9 L4.2 17.8 C2.8 19.2 2.8 21 4.2 22.4 L20.4 38.5 C19.2 35.5 19.5 33 21.8 30.8 L24.6 28 C26.1 26.5 26.1 24.6 24.6 23.2 L18.5 17.1 L22.7 12.9 C24.1 11.5 24.1 9.7 22.7 8.3 Z"/></clipPath></defs><g clip-path="url(#hc)" stroke="#6a6a6a" stroke-width="1.25" fill="none"><path d="M13.6 0.3 C15.5 3.5 15.3 6.5 13 9 L4.2 17.8 C2.8 19.2 2.8 21 4.2 22.4 L20.4 38.5"/><path d="M17.3 4 C19.2 7.2 19 10.2 16.7 12.5 L7.9 21.3 C6.5 22.7 6.5 24.5 7.9 25.9 L16 34"/><path d="M21 7.8 C22.9 11 22.7 14 20.4 16.3 L11.6 25.1 C10.2 26.5 10.2 28.3 11.6 29.7 L19 37"/><path d="M22.7 8.3 C24.1 9.7 24.1 11.5 22.7 12.9 L18.5 17.1 L24.6 23.2 C26.1 24.6 26.1 26.5 24.6 28 L21.8 30.8 C19.5 33 19.2 35.5 20.4 38.5"/><path d="M9 13 L25 29"/><path d="M6 16 L22 32"/><path d="M12 10 L27 25"/><path d="M14.5 20.5 C12.5 23 12.5 26 14.5 28.5"/><path d="M18.5 24.5 C16.5 27 16.5 30 18.5 32.5"/></g><path d="M13.6 0.3 C15.5 3.5 15.3 6.5 13 9 L4.2 17.8 C2.8 19.2 2.8 21 4.2 22.4 L20.4 38.5 C19.2 35.5 19.5 33 21.8 30.8 L24.6 28 C26.1 26.5 26.1 24.6 24.6 23.2 L18.5 17.1 L22.7 12.9 C24.1 11.5 24.1 9.7 22.7 8.3 Z" stroke="#6a6a6a" stroke-width="1.4" fill="none" stroke-linejoin="round"/></svg>
<svg class="a" style="left:23px;top:981.5px;" width="34.5" height="34.5" viewBox="0 0 34.5 34.5"><path d="M17.00 1.00 L30.53 7.51 L33.87 22.15 L24.51 33.89 L9.49 33.89 L0.13 22.15 L3.47 7.51 Z" fill="#6a6a6a" stroke="#6a6a6a" stroke-width="1.2" stroke-linejoin="round"/><circle cx="16.9" cy="18.5" r="9.45" fill="#fff"/><circle cx="16.9" cy="18.5" r="7.7" fill="#6a6a6a"/><g stroke="#fff" stroke-width="2.5" stroke-linecap="round"><path d="M16.90 18.50 L16.90 5.20"/><path d="M16.90 18.50 L27.30 10.21"/><path d="M16.90 18.50 L24.03 20.13"/><path d="M16.90 18.50 L20.07 25.09"/><path d="M16.90 18.50 L13.73 25.09"/><path d="M16.90 18.50 L9.77 20.13"/><path d="M16.90 18.50 L6.50 10.21"/></g><circle cx="16.9" cy="18.5" r="3" fill="#fff"/><circle cx="16.9" cy="18.5" r="1.6" fill="#6a6a6a"/></svg>
<div class="a" style="left:320px;top:65px;width:18px;height:957px;background:#fafafa;border-left:1px solid #ececec;box-sizing:border-box;"></div>
<div class="a" style="left:325px;top:76px;width:11px;height:621px;background:#c1c1c1;border-radius:6px;"></div>
<div class="a" style="left:0px;top:1022px;width:340px;height:67px;background:#fff;border-top:2px solid #efefef;box-sizing:border-box;"></div>
<svg class="a" style="left:307px;top:1050px;" width="18" height="13" viewBox="0 0 18 13"><path d="M7.5 1.5 L2 6.5 L7.5 11.5 M15.5 1.5 L10 6.5 L15.5 11.5" stroke="#333" stroke-width="2.6" fill="none" stroke-linecap="round" stroke-linejoin="round"/></svg>
<div class="a" style="left:1900px;top:0px;width:20px;height:1089px;background:#f9f9f9;border-left:1px solid #ececec;box-sizing:border-box;"></div>
<div class="a" style="left:1905px;top:85px;width:11px;height:595px;background:#c1c1c1;border-radius:6px;"></div>
<div class="a" style="left:0px;top:0px;width:1900px;height:65px;background:#ec6f2e;box-shadow:0 2px 4px rgba(0,0,0,0.13);"></div>
<div class="a" style="left:0px;top:0px;width:1900px;height:1px;background:rgba(255,255,255,0.2);"></div>
<svg class="a" style="left:18px;top:14px;" width="100" height="36" viewBox="0 0 100 36"><g stroke="#fff" stroke-width="3.1" fill="none" stroke-linecap="butt"><path d="M15.6 16.1 A6.5 8.3 0 1 0 15.6 25.6"/><path d="M23.65 3.9 V29.9"/><path d="M30.25 19.8 H42.45 A6.1 8.3 0 1 0 41.0 26.2"/><path d="M49.65 11.6 V22.6 A6.25 6.6 0 0 0 62.15 22.6 M62.15 11.6 V29.9"/><path d="M69.65 29.9 V11.6 M69.65 14.2 Q71.5 13.15 77.4 13.15"/><path d="M93.85 11.3 V29.9"/><ellipse cx="87.2" cy="20.85" rx="6.65" ry="8.3"/></g></svg>
<svg class="a" style="left:124px;top:16px;" width="34" height="34" viewBox="0 0 34 34"><path d="M16.6 1.4 A15.7 15.7 0 1 0 31.7 21.4 L24.4 19.3 A8.1 8.1 0 1 1 16.6 9 Z" fill="#fff"/><path d="M23.2 3.1 L32.3 6 L32.5 14.7 L23.2 11.8 Z" fill="#fff"/></svg>
<div class="t" style="left:799.5px;top:17.00px;line-height:30px;font-size:19px;color:#fff;font-weight:700;letter-spacing:0.08px;">Project</div>
<div class="a" style="left:878px;top:10px;width:117px;height:45.5px;background:#fff;border-radius:23px;box-shadow:0 3px 8px rgba(0,0,0,0.18);"></div>
<svg class="a" style="left:918px;top:23.2px;shape-rendering:crispEdges;" width="36" height="15.3" viewBox="0 0 36 15.3"><rect x="0" y="0.00" width="4.05" height="3.9" fill="#f6f6f6"/><rect x="4" y="0.00" width="4.05" height="3.9" fill="#eeeeee"/><rect x="12" y="0.00" width="4.05" height="3.9" fill="#f0f0f0"/><rect x="20" y="0.00" width="4.05" height="3.9" fill="#f0f0f0"/><rect x="24" y="0.00" width="4.05" height="3.9" fill="#eeeeee"/><rect x="0" y="3.83" width="4.05" height="3.9" fill="#f0f0f0"/><rect x="4" y="3.83" width="4.05" height="3.9" fill="#111"/><rect x="12" y="3.83" width="4.05" height="3.9" fill="#111"/><rect x="20" y="3.83" width="4.05" height="3.9" fill="#eeeeee"/><rect x="24" y="3.83" width="4.05" height="3.9" fill="#111"/><rect x="28" y="3.83" width="4.05" height="3.9" fill="#bbb"/><rect x="32" y="3.83" width="4.05" height="3.9" fill="#555"/><rect x="0" y="7.66" width="4.05" height="3.9" fill="#eeeeee"/><rect x="4" y="7.66" width="4.05" height="3.9" fill="#999"/><rect x="8" y="7.66" width="4.05" height="3.9" fill="#777"/><rect x="12" y="7.66" width="4.05" height="3.9" fill="#666"/><rect x="20" y="7.66" width="4.05" height="3.9" fill="#999"/><rect x="24" y="7.66" width="4.05" height="3.9" fill="#111"/><rect x="32" y="7.66" width="4.05" height="3.9" fill="#111"/><rect x="0" y="11.49" width="4.05" height="3.9" fill="#eeeeee"/><rect x="4" y="11.49" width="4.05" height="3.9" fill="#bbb"/><rect x="8" y="11.49" width="4.05" height="3.9" fill="#111"/><rect x="12" y="11.49" width="4.05" height="3.9" fill="#777"/><rect x="20" y="11.49" width="4.05" height="3.9" fill="#bbb"/><rect x="24" y="11.49" width="4.05" height="3.9" fill="#111"/><rect x="28" y="11.49" width="4.05" height="3.9" fill="#555"/><rect x="32" y="11.49" width="4.05" height="3.9" fill="#999"/></svg>
<div class="a" style="left:1638px;top:10px;width:145px;height:45.5px;background:#fff;border-radius:23px;box-shadow:0 3px 8px rgba(0,0,0,0.18);"></div>
<div class="t" style="left:1664.5px;top:17.50px;line-height:30px;font-size:18.5px;color:#111;font-weight:700;letter-spacing:0.08px;">Create ...</div>
<svg class="a" style="left:1808px;top:19px;" width="27" height="27" viewBox="0 0 27 27"><circle cx="13.6" cy="13.4" r="12.75" fill="#fff"/><path d="M9.4 10.6 C9.6 7.3 11.5 5.9 13.8 5.9 C16.3 5.9 18 7.6 18 9.6 C18 12.5 14.2 12.8 14.1 16.3" stroke="#ec6f2e" stroke-width="3.8" fill="none"/><circle cx="13.9" cy="20.2" r="2.3" fill="#ec6f2e"/></svg>
<svg class="a" style="left:1860px;top:19px;" width="28" height="28" viewBox="0 0 28 28"><circle cx="14.2" cy="13.4" r="12.75" fill="#fff"/><circle cx="14.2" cy="11.3" r="5.7" fill="#ec6f2e"/><path d="M5.4 20.3 Q6.8 17.2 9.6 16.9 Q14.2 19.6 18.8 16.9 Q21.6 17.2 23 20.3 Q19.8 24.3 14.2 24.3 Q8.6 24.3 5.4 20.3 Z" fill="#ec6f2e"/></svg>
<svg class="a" style="left:0px;top:1080px;" width="9" height="9" viewBox="0 0 9 9"><path d="M0 0 A9 9 0 0 0 9 9 H0 Z" fill="#000"/></svg>
<svg class="a" style="left:1911px;top:1080px;" width="9" height="9" viewBox="0 0 9 9"><path d="M9 0 A9 9 0 0 1 0 9 H9 Z" fill="#000"/></svg>
</body></html>
